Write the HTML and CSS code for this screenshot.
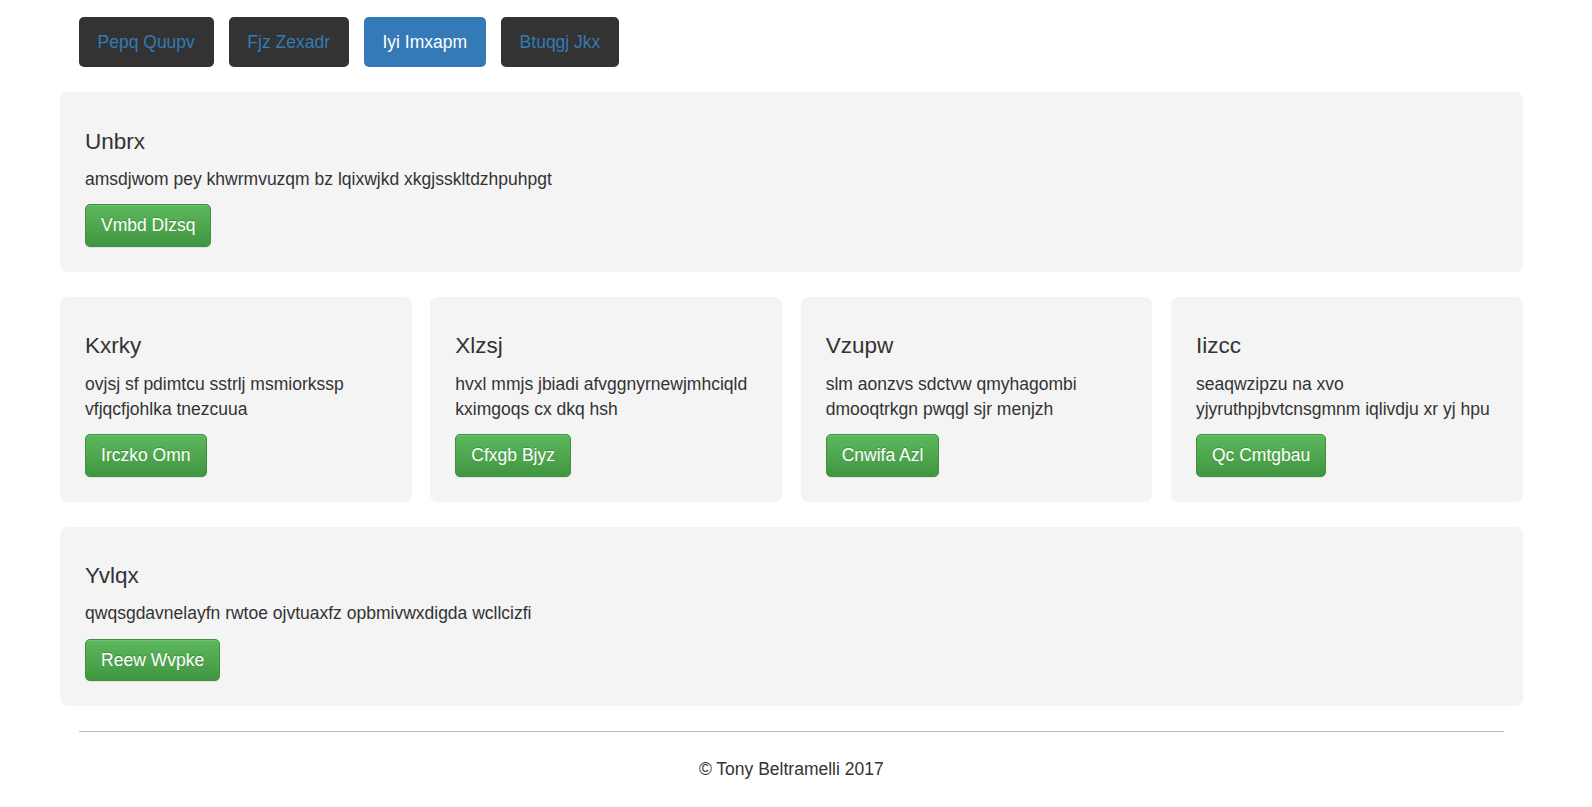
FILE: index.html
```html
<!DOCTYPE html>
<html lang="en">
<head>
<meta charset="utf-8">
<title>Page</title>
<link rel="stylesheet" href="styles.css">
</head>
<body>
<div class="page">
  <div class="container">
    <header class="header">
      <ul class="nav">
        <li><a href="#" class="pill">Pepq Quupv</a></li>
        <li><a href="#" class="pill">Fjz Zexadr</a></li>
        <li><a href="#" class="pill active">Iyi Imxapm</a></li>
        <li><a href="#" class="pill">Btuqgj Jkx</a></li>
      </ul>
    </header>

    <div class="row">
      <div class="jumbotron">
        <h4 class="title">Unbrx</h4>
        <p class="text">amsdjwom pey khwrmvuzqm bz lqixwjkd xkgjsskltdzhpuhpgt</p>
        <a href="#" class="btn">Vmbd Dlzsq</a>
      </div>
    </div>

    <div class="row cards">
      <div class="jumbotron">
        <h4 class="title">Kxrky</h4>
        <p class="text">ovjsj sf pdimtcu sstrlj msmiorkssp vfjqcfjohlka tnezcuua</p>
        <a href="#" class="btn">Irczko Omn</a>
      </div>
      <div class="jumbotron">
        <h4 class="title">Xlzsj</h4>
        <p class="text">hvxl mmjs jbiadi afvggnyrnewjmhciqld kximgoqs cx dkq hsh</p>
        <a href="#" class="btn">Cfxgb Bjyz</a>
      </div>
      <div class="jumbotron">
        <h4 class="title">Vzupw</h4>
        <p class="text">slm aonzvs sdctvw qmyhagombi dmooqtrkgn pwqgl sjr menjzh</p>
        <a href="#" class="btn">Cnwifa Azl</a>
      </div>
      <div class="jumbotron">
        <h4 class="title">Iizcc</h4>
        <p class="text">seaqwzipzu na xvo yjyruthpjbvtcnsgmnm iqlivdju xr yj hpu</p>
        <a href="#" class="btn">Qc Cmtgbau</a>
      </div>
    </div>

    <div class="row">
      <div class="jumbotron">
        <h4 class="title">Yvlqx</h4>
        <p class="text">qwqsgdavnelayfn rwtoe ojvtuaxfz opbmivwxdigda wcllcizfi</p>
        <a href="#" class="btn">Reew Wvpke</a>
      </div>
    </div>

    <footer class="footer">
      <hr class="rule">
      <p class="copy">&copy; Tony Beltramelli 2017</p>
    </footer>
  </div>
</div>
</body>
</html>
```

FILE: styles.css
```css
* {
  box-sizing: border-box;
}

html, body {
  margin: 0;
  padding: 0;
  background: #fff;
}

body {
  font-family: "Liberation Sans", Arial, Helvetica, sans-serif;
  font-size: 17.5px;
  line-height: 25px;
  color: #333;
}

.page {
  padding-right: 9.4px;
}

.container {
  width: 1462.5px;
  margin: 0 auto;
  padding: 0 18.75px;
}

.header {
  padding-top: 17px;
  margin-bottom: 25px;
}

.nav {
  list-style: none;
  margin: 0;
  padding: 0;
  display: flex;
  gap: 15px;
}

.pill {
  display: block;
  padding: 12.5px 18.75px;
  background: #333;
  color: #337ab7;
  text-decoration: none;
  border-radius: 5px;
  line-height: 25px;
}

.pill.active {
  background: #337ab7;
  color: #fff;
}

.row {
  margin: 0 -18.75px 25px;
}

.cards {
  display: grid;
  grid-template-columns: repeat(4, 1fr);
  gap: 18.75px;
}

.jumbotron {
  background: #f4f4f4;
  border-radius: 7.5px;
  padding: 25px;
}

.title {
  margin: 12.5px 0;
  font-size: 22.5px;
  line-height: 1.1;
  font-weight: normal;
  color: #333;
}

.text {
  margin: 0 0 12.5px;
}

.btn {
  display: inline-block;
  padding: 7.75px 15px;
  font-size: 17.5px;
  line-height: 25px;
  color: #fff;
  text-decoration: none;
  border: 1.25px solid #3e8f3e;
  border-radius: 5px;
  background-color: #449d44;
  background-image: linear-gradient(to bottom, #5cb85c 0%, #419641 100%);
  text-shadow: 0 -1px 0 rgba(0, 0, 0, 0.2);
  box-shadow: inset 0 1px 0 rgba(255, 255, 255, 0.15), 0 1px 1px rgba(0, 0, 0, 0.075);
}

.footer {
  padding-bottom: 25px;
}

.rule {
  margin: 0 0 25px;
  border: 0;
  border-top: 1px solid #bcbcbc;
  height: 0;
}

.copy {
  margin: 0;
  text-align: center;
}
```
